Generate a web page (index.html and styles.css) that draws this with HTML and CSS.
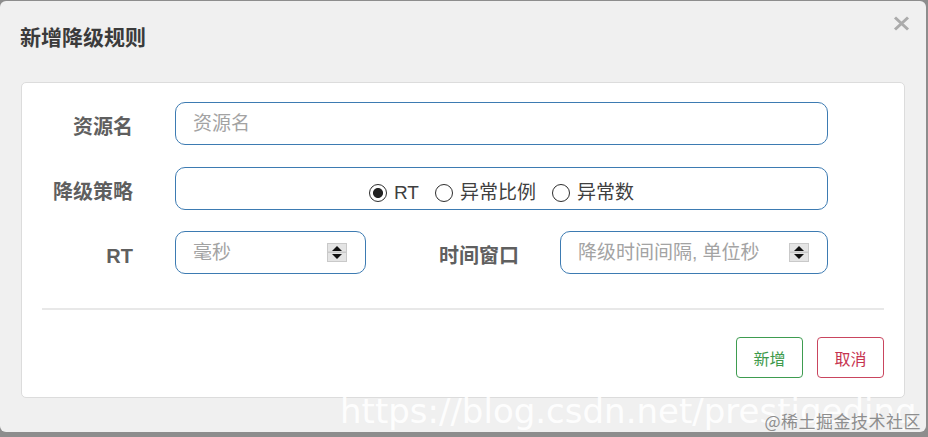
FILE: index.html
```html
<!DOCTYPE html>
<html lang="zh-CN">
<head>
<meta charset="utf-8">
<title>新增降级规则</title>
<link rel="stylesheet" href="styles.css">
</head>
<body>
<div class="modal">
  <div class="modal-header">
    <h4 class="title">新增降级规则</h4>
    <button class="close" type="button" aria-label="Close">
      <svg width="17" height="15" viewBox="0 0 17 15"><path d="M2 1.5 L15 13.5 M15 1.5 L2 13.5" stroke="#ababab" stroke-width="3" fill="none"/></svg>
    </button>
  </div>
  <div class="panel">
    <form class="form">
      <div class="row r1">
        <label class="lbl">资源名</label>
        <input class="ctrl wide" type="text" placeholder="资源名">
      </div>
      <div class="row r2">
        <label class="lbl">降级策略</label>
        <div class="ctrl wide radios">
          <label class="radio"><input type="radio" name="grade" checked><span>RT</span></label>
          <label class="radio"><input type="radio" name="grade"><span>异常比例</span></label>
          <label class="radio"><input type="radio" name="grade"><span>异常数</span></label>
        </div>
      </div>
      <div class="row r3">
        <label class="lbl">RT</label>
        <div class="ctrl num rt">
          <input type="text" placeholder="毫秒">
          <svg class="spin" width="20" height="19" viewBox="0 0 20 19"><rect x="0.5" y="0.5" width="19" height="8.5" fill="#e4e4e4" stroke="#c9c9c9"/><rect x="0.5" y="9.5" width="19" height="9" fill="#e4e4e4" stroke="#c9c9c9"/><path d="M5 8 L15 8 L10 3 Z" fill="#111"/><path d="M5 11 L15 11 L10 16 Z" fill="#111"/></svg>
        </div>
        <label class="lbl lbl2">时间窗口</label>
        <div class="ctrl num win">
          <input type="text" placeholder="降级时间间隔, 单位秒">
          <svg class="spin" width="20" height="19" viewBox="0 0 20 19"><rect x="0.5" y="0.5" width="19" height="8.5" fill="#e4e4e4" stroke="#c9c9c9"/><rect x="0.5" y="9.5" width="19" height="9" fill="#e4e4e4" stroke="#c9c9c9"/><path d="M5 8 L15 8 L10 3 Z" fill="#111"/><path d="M5 11 L15 11 L10 16 Z" fill="#111"/></svg>
        </div>
      </div>
    </form>
    <hr class="sep">
    <div class="actions">
      <button class="btn ok" type="button">新增</button>
      <button class="btn cancel" type="button">取消</button>
    </div>
  </div>
</div>
<div class="wm">https://blog.csdn.net/prestigeding</div>
<div class="wm2">@稀土掘金技术社区</div>
</body>
</html>
```

FILE: styles.css
```css
* { box-sizing: border-box; }
html, body { margin: 0; padding: 0; }
body {
  position: relative;
  width: 928px;
  height: 437px;
  overflow: hidden;
  background: #8d8d8d;
  font-family: "Liberation Sans", "Noto Sans CJK SC", sans-serif;
}
.modal {
  margin-top: 1px;
  width: 926px;
  height: 431px;
  background: #f0f0f0;
  border-radius: 6px;
}
.modal-header {
  display: flex;
  justify-content: space-between;
  align-items: flex-start;
  padding: 22px 16px 29px 20px;
}
.title {
  margin: 0;
  font-size: 21px;
  line-height: 30px;
  font-weight: bold;
  color: #3b3b3b;
}
.close {
  margin-top: -7px;
  padding: 0;
  border: 0;
  background: none;
  width: 17px;
  height: 15px;
  display: block;
}
.close svg { display: block; }
.panel {
  margin: 0 21px;
  height: 316px;
  background: #fff;
  border: 1px solid #dcdcdc;
  border-radius: 5px;
  padding: 19px 0 19px 0;
}
.row {
  display: flex;
  align-items: flex-start;
  height: 43px;
}
.r1 { margin-bottom: 22px; }
.r2 { margin-bottom: 21px; }
.lbl {
  width: 111px;
  margin-right: 42px;
  text-align: right;
  padding-top: 4px;
  line-height: 43px;
  font-size: 20px;
  font-weight: bold;
  color: #5f5f5f;
  white-space: nowrap;
}
.lbl2 {
  width: 153px;
  margin-right: 41px;
}
.ctrl {
  height: 43px;
  border: 1px solid #3d7bb2;
  border-radius: 10px;
  background: #fff;
  font-family: "Liberation Sans", "Noto Sans CJK SC", sans-serif;
  font-size: 19px;
  color: #444;
}
input.ctrl { padding: 0 17px; outline: none; }
.wide { width: 653px; }
.ctrl::placeholder, .num input::placeholder { color: #a3a3a3; }
.radios {
  display: flex;
  justify-content: center;
  align-items: center;
  padding-top: 9px;
}
.radio {
  display: flex;
  align-items: center;
  margin-right: 16px;
  line-height: 24px;
  color: #3f3f3f;
}
.radio:last-child { margin-right: 0; }
.radio input {
  -webkit-appearance: none;
  appearance: none;
  margin: 0 7px 0 0;
  width: 18px;
  height: 18px;
  border: 1px solid #2e2e2e;
  border-radius: 50%;
  background: #fff;
}
.radio input:checked {
  background: radial-gradient(circle, #222 0, #222 4.6px, #fff 5.4px);
}
.num {
  display: flex;
  align-items: center;
  padding: 0 18px 0 17px;
}
.num input {
  flex: 1;
  min-width: 0;
  border: 0;
  outline: none;
  padding: 0;
  background: transparent;
  font: inherit;
  color: inherit;
  height: 41px;
}
.spin { display: block; flex: none; }
.rt { width: 191px; }
.win { width: 268px; }
.sep {
  margin: 34px 20px 0 20px;
  height: 2px;
  border: 0;
  background: #e8e8e8;
}
.actions {
  display: flex;
  justify-content: flex-end;
  gap: 14px;
  margin-top: 27px;
  padding-right: 20px;
}
.btn {
  width: 67px;
  height: 41px;
  border-radius: 4px;
  background: #fff;
  font-family: "Liberation Sans", "Noto Sans CJK SC", sans-serif;
  font-size: 16px;
  padding: 0;
}
.ok { border: 1px solid #3e9c50; color: #3d9a4b; }
.cancel { border: 1px solid #c9455e; color: #c6334f; }
.wm {
  position: absolute;
  left: 340px;
  top: 394px;
  font-family: "DejaVu Sans", sans-serif;
  font-size: 34px;
  line-height: 34px;
  color: rgba(255, 255, 255, 0.92);
  white-space: nowrap;
  pointer-events: none;
}
.wm2 {
  position: absolute;
  right: 7px;
  top: 412px;
  font-family: "Noto Sans CJK SC", sans-serif;
  font-size: 17px;
  line-height: 18px;
  letter-spacing: 0.5px;
  color: #8e8e8e;
  white-space: nowrap;
  pointer-events: none;
}
```
